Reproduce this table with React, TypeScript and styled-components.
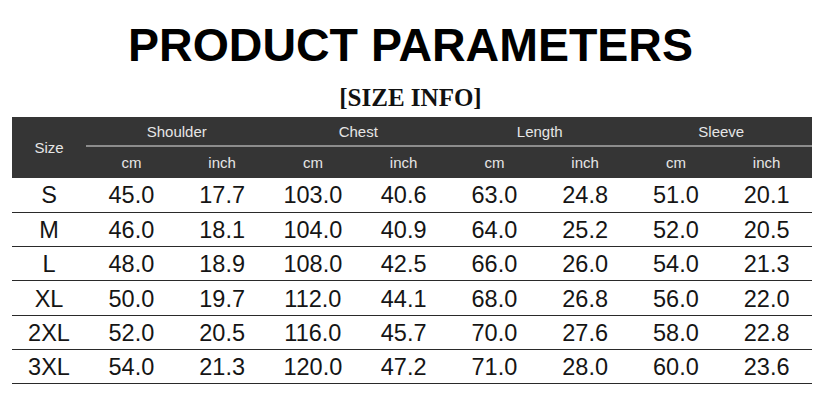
import styled, { createGlobalStyle } from "styled-components";

const GlobalStyle = createGlobalStyle`
  html, body {
    margin: 0;
    padding: 0;
    background: #ffffff;
  }
  body {
    font-family: "Liberation Sans", Arial, sans-serif;
    color: #111;
  }
`;

const Page = styled.div`
  width: 821px;
  height: 418px;
  display: flex;
  flex-direction: column;
  align-items: center;
  box-sizing: border-box;
  padding-top: 22px;
`;

const Title = styled.h1`
  margin: 0;
  font-family: "Liberation Sans", Arial, sans-serif;
  font-size: 46.5px;
  line-height: 46px;
  font-weight: 700;
  color: #000;
`;

const SubTitle = styled.h2`
  margin: 17px 0 7px;
  font-family: "Liberation Serif", "Times New Roman", serif;
  font-size: 25px;
  line-height: 25px;
  font-weight: 700;
  color: #111;
`;

const Table = styled.table`
  width: 800px;
  margin-left: 3px;
  border-collapse: collapse;
  table-layout: fixed;
`;

const HeadRow = styled.tr<{ $h: number }>`
  background: #353535;
  height: ${(p) => p.$h}px;
`;

const HeadCell = styled.th<{ $line?: boolean }>`
  padding: 0;
  font-family: "Liberation Sans", Arial, sans-serif;
  font-size: 15px;
  font-weight: 400;
  color: #e6e6e6;
  text-align: center;
  vertical-align: middle;
  border-bottom: ${(p) => (p.$line ? "2px solid #8c8c8c" : "none")};
`;

const Row = styled.tr`
  height: 34.33px;
  border-bottom: 1px solid #2a2a2a;
`;

const Cell = styled.td`
  padding: 2px 0 0;
  font-family: "Liberation Sans", Arial, sans-serif;
  font-size: 23.5px;
  color: #151515;
  text-align: center;
  vertical-align: middle;
`;

const groups = ["Shoulder", "Chest", "Length", "Sleeve"];

const rows: [string, string[]][] = [
  ["S", ["45.0", "17.7", "103.0", "40.6", "63.0", "24.8", "51.0", "20.1"]],
  ["M", ["46.0", "18.1", "104.0", "40.9", "64.0", "25.2", "52.0", "20.5"]],
  ["L", ["48.0", "18.9", "108.0", "42.5", "66.0", "26.0", "54.0", "21.3"]],
  ["XL", ["50.0", "19.7", "112.0", "44.1", "68.0", "26.8", "56.0", "22.0"]],
  ["2XL", ["52.0", "20.5", "116.0", "45.7", "70.0", "27.6", "58.0", "22.8"]],
  ["3XL", ["54.0", "21.3", "120.0", "47.2", "71.0", "28.0", "60.0", "23.6"]],
];

export default function App() {
  return (
    <>
      <GlobalStyle />
      <Page>
        <Title>PRODUCT PARAMETERS</Title>
        <SubTitle>[SIZE INFO]</SubTitle>
        <Table>
          <colgroup>
            <col style={{ width: 74 }} />
            {Array.from({ length: 8 }).map((_, i) => (
              <col key={i} />
            ))}
          </colgroup>
          <thead>
            <HeadRow $h={29}>
              <HeadCell rowSpan={2}>Size</HeadCell>
              {groups.map((g) => (
                <HeadCell key={g} colSpan={2} $line>
                  {g}
                </HeadCell>
              ))}
            </HeadRow>
            <HeadRow $h={32}>
              {groups.flatMap((g) => [
                <HeadCell key={g + "cm"}>cm</HeadCell>,
                <HeadCell key={g + "in"}>inch</HeadCell>,
              ])}
            </HeadRow>
          </thead>
          <tbody>
            {rows.map(([size, vals]) => (
              <Row key={size}>
                <Cell>{size}</Cell>
                {vals.map((v, i) => (
                  <Cell key={i}>{v}</Cell>
                ))}
              </Row>
            ))}
          </tbody>
        </Table>
      </Page>
    </>
  );
}
